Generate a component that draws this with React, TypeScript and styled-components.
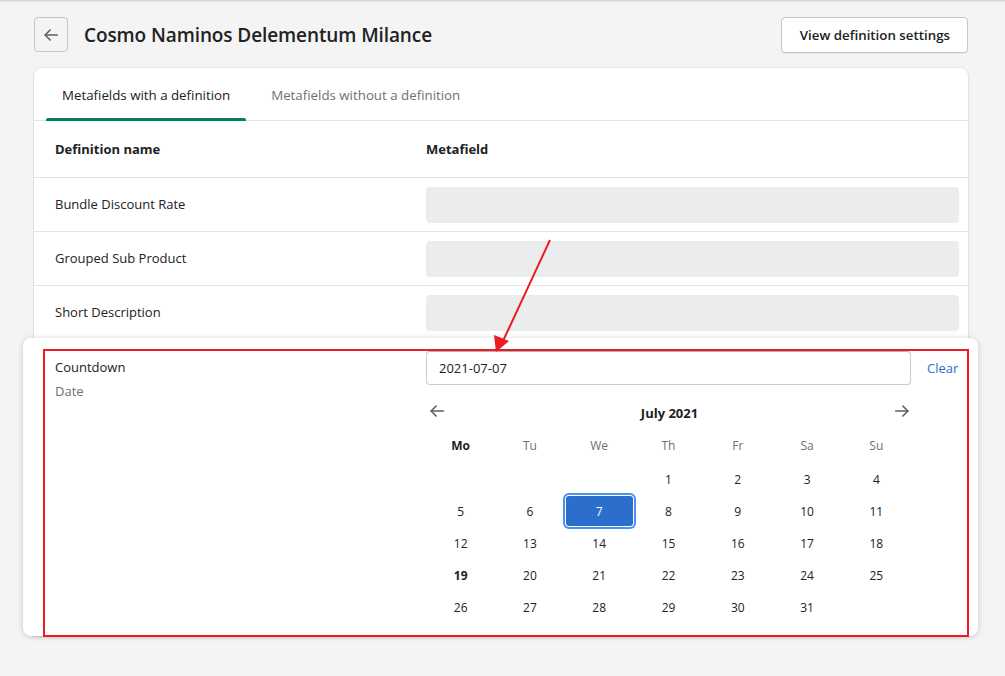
import React from "react";
import styled, { createGlobalStyle } from "styled-components";

const Global = createGlobalStyle`
  html, body { margin: 0; padding: 0; }
  body {
    background: #f4f4f4;
    font-family: "Open Sans", "Noto Sans", sans-serif;
    color: #202223;
    width: 1005px;
    height: 676px;
    overflow: hidden;
  }
`;

const Page = styled.div`
  position: relative;
  height: 676px;
  box-sizing: border-box;
  padding: 16px 37px 0 34px;
  border-top: 1px solid #d6d6d6;
  box-shadow: inset 0 1px 1px rgba(0,0,0,0.06);
`;

const Header = styled.div`
  display: flex;
  align-items: center;
  height: 35px;
`;

const BackButton = styled.button`
  width: 34px;
  height: 35px;
  border: 1px solid #c4c6c8;
  border-radius: 4px;
  background: transparent;
  display: flex;
  align-items: center;
  justify-content: center;
  padding: 0;
  color: #5c5f62;
`;

const Title = styled.h1`
  margin: 0 0 0 16px;
  font-size: 19px;
  font-weight: 600;
  letter-spacing: -0.1px;
  flex: 1;
`;

const OutlineButton = styled.button`
  height: 36px;
  padding: 0 17px 0 18px;
  border: 1px solid #c4c6c8;
  border-radius: 4px;
  background: #fff;
  font-family: inherit;
  font-size: 13.3px;
  font-weight: 600;
  color: #202223;
  box-shadow: 0 1px 0 rgba(0,0,0,0.05);
`;

const Card = styled.div`
  margin-top: 16px;
  background: #fff;
  border-radius: 8px 8px 0 0;
  box-shadow: 0 0 0 1px rgba(63,63,68,0.04), 0 1px 3px rgba(63,63,68,0.12);
`;

const Tabs = styled.div`
  display: flex;
  gap: 9px;
  padding: 0 12px;
  height: 52px;
  border-bottom: 1px solid #e1e3e5;
`;

const Tab = styled.div<{ $active?: boolean }>`
  position: relative;
  display: flex;
  align-items: center;
  padding: 1px 16px 0;
  font-size: 13.3px;
  color: ${p => (p.$active ? "#202223" : "#6d7175")};
  &::after {
    content: "";
    position: absolute;
    left: 0;
    right: 0;
    bottom: -1px;
    height: 3px;
    border-radius: 2px 2px 0 0;
    background: ${p => (p.$active ? "#008060" : "transparent")};
  }
`;

const Row = styled.div<{ $h?: number }>`
  display: grid;
  grid-template-columns: 371px 1fr;
  align-items: center;
  height: ${p => p.$h ?? 53}px;
  padding: 0 9px 0 21px;
  border-bottom: 1px solid #e1e3e5;
`;

const HeadCell = styled.div`
  font-size: 13px;
  font-weight: 700;
`;

const Cell = styled.div`
  font-size: 13px;
  padding-bottom: 1px;
`;

const Placeholder = styled.div`
  height: 36px;
  background: #ebeced;
  border-radius: 4px;
`;

const Popup = styled.div`
  position: relative;
  margin: -2px -10px 0 -11px;
  padding: 11px 9px 0 20px;
  background: #fff;
  border-radius: 8px;
  height: 298px;
  box-sizing: border-box;
  box-shadow: 0 0 6px rgba(0,0,0,0.12), 0 2px 4px rgba(0,0,0,0.08);
`;

const Highlight = styled.div`
  height: 288px;
  box-sizing: border-box;
  border: 2px solid #ec1c24;
  display: grid;
  grid-template-columns: 371px 1fr;
  padding: 0 8px 0 10px;
`;

const FieldLabel = styled.div`
  padding-top: 4px;
  font-size: 13px;
  line-height: 24px;
`;

const Subdued = styled.div`
  color: #6d7175;
`;

const PickerCol = styled.div`
  display: flex;
  flex-direction: column;
`;

const InputRow = styled.div`
  display: flex;
  align-items: center;
  gap: 16px;
`;

const Input = styled.div`
  flex: 0 0 485px;
  box-sizing: border-box;
  height: 34px;
  border: 1px solid #c9cccf;
  border-top-color: #aeb4b9;
  border-radius: 4px;
  padding: 0 12px;
  display: flex;
  align-items: center;
  font-size: 13px;
`;

const ClearLink = styled.a`
  color: #2c6ecb;
  font-size: 13px;
  text-decoration: none;
`;

const Calendar = styled.div`
  width: 485px;
  margin-top: 15px;
`;

const MonthBar = styled.div`
  display: flex;
  align-items: center;
  justify-content: space-between;
  height: 22px;
  padding: 0 0 0 2px;
  color: #5c5f62;
`;

const MonthTitle = styled.div`
  font-size: 13px;
  font-weight: 700;
  color: #202223;
  padding-top: 3px;
`;

const Grid = styled.div`
  display: grid;
  grid-template-columns: repeat(7, 1fr);
  margin-top: 11px;
`;

const Weekday = styled.div<{ $bold?: boolean }>`
  height: 24px;
  display: flex;
  align-items: center;
  justify-content: center;
  font-size: 12px;
  color: ${p => (p.$bold ? "#202223" : "#6d7175")};
  font-weight: ${p => (p.$bold ? 700 : 400)};
  margin-bottom: 6px;
`;

const Day = styled.div<{ $selected?: boolean; $bold?: boolean }>`
  height: 32px;
  display: flex;
  align-items: center;
  justify-content: center;
  font-size: 12px;
  border-radius: 4px;
  font-weight: ${p => (p.$bold ? 700 : 400)};
  color: ${p => (p.$selected ? "#fff" : "#202223")};
  background: ${p => (p.$selected ? "#2c6ecb" : "transparent")};
  box-shadow: ${p =>
    p.$selected ? "inset 0 0 0 1px #fff, 0 0 0 2px #4b93f0" : "none"};
`;

const ArrowOverlay = styled.svg`
  position: absolute;
  left: 0;
  top: 0;
  pointer-events: none;
`;

const Arrow = ({ dir }: { dir: "left" | "right" }) => (
  <svg width="18" height="18" viewBox="0 0 20 20" fill="none">
    <g
      stroke="#5c5f62"
      strokeWidth="1.8"
      strokeLinecap="round"
      strokeLinejoin="round"
      transform={dir === "right" ? "rotate(180 10 10)" : undefined}
    >
      <path d="M17 10H3.5" />
      <path d="M9 4.5L3.5 10L9 15.5" />
    </g>
  </svg>
);

const weekdays = ["Mo", "Tu", "We", "Th", "Fr", "Sa", "Su"];

export default function App() {
  const days: (number | null)[] = [null, null, null];
  for (let i = 1; i <= 31; i++) days.push(i);
  while (days.length % 7) days.push(null);

  return (
    <>
      <Global />
      <Page>
        <Header>
          <BackButton aria-label="Back">
            <Arrow dir="left" />
          </BackButton>
          <Title>Cosmo Naminos Delementum Milance</Title>
          <OutlineButton>View definition settings</OutlineButton>
        </Header>
        <Card>
          <Tabs>
            <Tab $active>Metafields with a definition</Tab>
            <Tab>Metafields without a definition</Tab>
          </Tabs>
          <Row $h={56}>
            <HeadCell>Definition name</HeadCell>
            <HeadCell>Metafield</HeadCell>
          </Row>
          {["Bundle Discount Rate", "Grouped Sub Product", "Short Description"].map(n => (
            <Row key={n}>
              <Cell>{n}</Cell>
              <Placeholder />
            </Row>
          ))}
          <Popup>
            <Highlight>
              <FieldLabel>
                <div>Countdown</div>
                <Subdued>Date</Subdued>
              </FieldLabel>
              <PickerCol>
                <InputRow>
                  <Input>2021-07-07</Input>
                  <ClearLink href="#">Clear</ClearLink>
                </InputRow>
                <Calendar>
                  <MonthBar>
                    <Arrow dir="left" />
                    <MonthTitle>July 2021</MonthTitle>
                    <Arrow dir="right" />
                  </MonthBar>
                  <Grid>
                    {weekdays.map((w, i) => (
                      <Weekday key={w} $bold={i === 0}>
                        {w}
                      </Weekday>
                    ))}
                    {days.map((d, i) => (
                      <Day key={i} $selected={d === 7} $bold={d === 19}>
                        {d ?? ""}
                      </Day>
                    ))}
                  </Grid>
                </Calendar>
              </PickerCol>
            </Highlight>
          </Popup>
        </Card>
        <ArrowOverlay width="1005" height="676">
          <line x1="550" y1="239" x2="503" y2="340" stroke="#ec1c24" strokeWidth="2" />
          <polygon points="496,351 494,334 509,340" fill="#ec1c24" />
        </ArrowOverlay>
      </Page>
    </>
  );
}
